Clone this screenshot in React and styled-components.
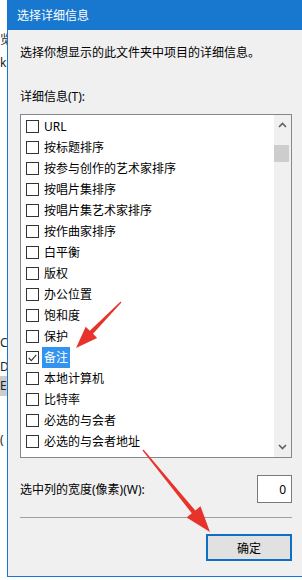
import React from 'react'
import styled, { createGlobalStyle } from 'styled-components'

const GlobalStyle = createGlobalStyle`
  html, body {
    margin: 0;
    padding: 0;
    background: #ffffff;
  }
  body {
    font-family: "Noto Sans", "Noto Sans CJK SC", sans-serif;
    font-size: 12px;
    color: #000;
  }
`;

const Screen = styled.div`
  position: relative;
  display: flex;
  width: 302px;
  height: 580px;
  overflow: hidden;
  background: #ffffff;
`;

const BackWindow = styled.div`
  flex: none;
  width: 7px;
  display: flex;
  flex-direction: column;
  overflow: hidden;
  background: #ffffff;
  color: #222;
`;

const BackLine = styled.div`
  margin-top: ${p => p.$gap}px;
  height: ${p => p.$h || 16}px;
  line-height: ${p => p.$h || 16}px;
  white-space: nowrap;
  font-size: 12px;
  background: ${p => (p.$shade ? '#cccccc' : 'transparent')};
`;

const Dialog = styled.div`
  flex: none;
  width: 295px;
  height: 576px;
  display: flex;
  flex-direction: column;
  border: 1px solid #1878d0;
  border-top: none;
  background: #f0f0f0;
`;

const TitleBar = styled.div`
  height: 30px;
  display: flex;
  align-items: center;
  padding-left: 9px;
  background: #1878d0;
  color: #ffffff;
  font-size: 12px;
`;

const Body = styled.div`
  display: flex;
  flex-direction: column;
  padding: 0 11px 0 12px;
`;

const Text = styled.div`
  margin-top: ${p => p.$gap}px;
  height: 16px;
  line-height: 16px;
  white-space: nowrap;
`;

const ListBox = styled.div`
  margin-top: 9px;
  height: 342px;
  display: flex;
  border: 1px solid #828790;
  background: #ffffff;
`;

const Items = styled.div`
  flex: 1;
  display: flex;
  flex-direction: column;
  padding-top: 1px;
`;

const Row = styled.div`
  flex: none;
  height: 21px;
  display: flex;
  align-items: center;
  padding-left: 5px;
`;

const Box = styled.span`
  flex: none;
  width: 11px;
  height: 11px;
  border: 1px solid #333333;
  background: #ffffff;
  margin-right: 3px;
  display: flex;
  align-items: center;
  justify-content: center;
`;

const ItemText = styled.span`
  height: 21px;
  line-height: 21px;
  padding: 0 2px;
  white-space: nowrap;
  background: ${p => (p.$selected ? '#3394f0' : 'transparent')};
  color: ${p => (p.$selected ? '#ffffff' : '#000000')};
`;

const ScrollBar = styled.div`
  flex: none;
  width: 17px;
  display: flex;
  flex-direction: column;
  background: #f0f0f0;
`;

const ArrowButton = styled.div`
  flex: none;
  height: 20px;
  display: flex;
  align-items: center;
  justify-content: center;
`;

const Thumb = styled.div`
  flex: none;
  margin: 10px 2px 0 0;
  height: 17px;
  background: #cdcdcd;
`;

const Track = styled.div`
  flex: 1;
`;

const WidthRow = styled.div`
  margin-top: 17px;
  display: flex;
  align-items: center;
  justify-content: space-between;
`;

const NumberBox = styled.div`
  width: 33px;
  height: 26px;
  border: 1px solid #7a7a7a;
  background: #ffffff;
  display: flex;
  align-items: center;
  justify-content: flex-end;
  span {
    margin-right: 5px;
  }
`;

const Separator = styled.div`
  margin-top: 14px;
  height: 1px;
  background: #a0a0a0;
`;

const Footer = styled.div`
  margin-top: 16px;
  display: flex;
  justify-content: flex-end;
`;

const OkButton = styled.div`
  width: 82px;
  height: 23px;
  border: 2px solid #0f6fc6;
  background: #e1e1e1;
  display: flex;
  align-items: center;
  justify-content: center;
`;

const Overlay = styled.svg`
  position: absolute;
  left: 0;
  top: 0;
  pointer-events: none;
`;

const items = [
  'URL',
  '按标题排序',
  '按参与创作的艺术家排序',
  '按唱片集排序',
  '按唱片集艺术家排序',
  '按作曲家排序',
  '白平衡',
  '版权',
  '办公位置',
  '饱和度',
  '保护',
  '备注',
  '本地计算机',
  '比特率',
  '必选的与会者',
  '必选的与会者地址',
];

// tapered arrow polygon from tail to tip
const arrowPoints = (tx, ty, hx, hy, headLen, headHalf, shaftHalf) => {
  const dx = hx - tx;
  const dy = hy - ty;
  const len = Math.hypot(dx, dy);
  const ux = dx / len;
  const uy = dy / len;
  const px = -uy;
  const py = ux;
  const bx = hx - ux * headLen;
  const by = hy - uy * headLen;
  const pts = [
    [tx + px * 0.6, ty + py * 0.6],
    [bx + px * shaftHalf, by + py * shaftHalf],
    [bx + px * headHalf, by + py * headHalf],
    [hx, hy],
    [bx - px * headHalf, by - py * headHalf],
    [bx - px * shaftHalf, by - py * shaftHalf],
    [tx - px * 0.6, ty - py * 0.6],
  ];
  return pts.map(p => p.map(v => v.toFixed(1)).join(',')).join(' ');
};

const Chevron = ({ up }) => (
  <svg width="9" height="6" viewBox="0 0 9 6">
    <path
      d={up ? 'M1 5 L4.5 1.5 L8 5' : 'M1 1 L4.5 4.5 L8 1'}
      fill="none"
      stroke="#606060"
      strokeWidth="1.6"
    />
  </svg>
);

const App = () => {
  return (
    <>
      <GlobalStyle />
      <Screen>
        <BackWindow>
          <BackLine $gap={32}>览</BackLine>
          <BackLine $gap={7}>k</BackLine>
          <BackLine $gap={264}>C</BackLine>
          <BackLine $gap={8}>D</BackLine>
          <BackLine $gap={1} $h={20} $shade>E:</BackLine>
          <BackLine $gap={36}>(</BackLine>
        </BackWindow>
        <Dialog>
          <TitleBar>选择详细信息</TitleBar>
          <Body>
            <Text $gap={15}>选择你想显示的此文件夹中项目的详细信息。</Text>
            <Text $gap={28}>详细信息(T):</Text>
            <ListBox>
              <Items>
                {items.map(label => (
                  <Row key={label}>
                    <Box>
                      {label === '备注' && (
                        <svg width="9" height="8" viewBox="0 0 9 8">
                          <path d="M0.8 4 L3.3 6.6 L8.3 0.8" fill="none" stroke="#333" strokeWidth="1.1" />
                        </svg>
                      )}
                    </Box>
                    <ItemText $selected={label === '备注'}>{label}</ItemText>
                  </Row>
                ))}
              </Items>
              <ScrollBar>
                <ArrowButton><Chevron up /></ArrowButton>
                <Thumb />
                <Track />
                <ArrowButton><Chevron /></ArrowButton>
              </ScrollBar>
            </ListBox>
            <WidthRow>
              <span>选中列的宽度(像素)(W):</span>
              <NumberBox><span>0</span></NumberBox>
            </WidthRow>
            <Separator />
            <Footer>
              <OkButton>确定</OkButton>
            </Footer>
          </Body>
        </Dialog>
        <Overlay width="302" height="580" viewBox="0 0 302 580">
          <polygon points={arrowPoints(121, 302, 76, 348, 22, 8, 2.2)} fill="#e8332c" />
          <polygon points={arrowPoints(143, 450, 210, 532, 26, 9, 2.2)} fill="#e8332c" />
        </Overlay>
      </Screen>
    </>
  );
};

export default App
